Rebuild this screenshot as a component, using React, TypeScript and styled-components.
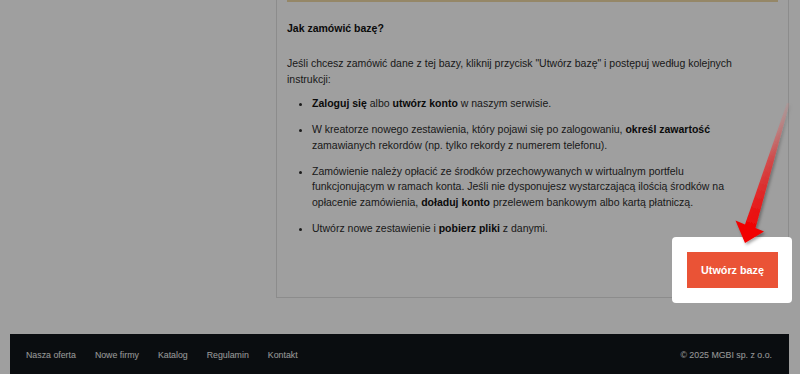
import React from 'react';
import styled, { createGlobalStyle } from 'styled-components';

const GlobalStyle = createGlobalStyle`
  html, body {
    margin: 0;
    padding: 0;
    background: #ffffff;
    overflow: hidden;
  }

  body {
    font-family: "Liberation Sans", Arial, sans-serif;
    color: #333333;
  }
`;

const footerLinks = ['Nasza oferta', 'Nowe firmy', 'Katalog', 'Regulamin', 'Kontakt'];

const App: React.FC = () => {
  return (
    <>
      <GlobalStyle />
      <PageContainer>
        <MainRow>
          <Sidebar />
          <ContentPanel>
            <NoticeBox />
            <SectionTitle>Jak zamówić bazę?</SectionTitle>
            <Paragraph>
              Jeśli chcesz zamówić dane z tej bazy, kliknij przycisk "Utwórz bazę" i postępuj według kolejnych
              <br />
              instrukcji:
            </Paragraph>
            <StepList>
              <li>
                <b>Zaloguj się</b> albo <b>utwórz konto</b> w naszym serwisie.
              </li>
              <li>
                W kreatorze nowego zestawienia, który pojawi się po zalogowaniu, <b>określ zawartość</b>
                <br />
                zamawianych rekordów (np. tylko rekordy z numerem telefonu).
              </li>
              <li>
                Zamówienie należy opłacić ze środków przechowywanych w wirtualnym portfelu
                <br />
                funkcjonującym w ramach konta. Jeśli nie dysponujesz wystarczającą ilością środków na
                <br />
                opłacenie zamówienia, <b>doładuj konto</b> przelewem bankowym albo kartą płatniczą.
              </li>
              <li>
                Utwórz nowe zestawienie i <b>pobierz pliki</b> z danymi.
              </li>
            </StepList>
            <ButtonRow>
              <Spotlight>
                <PointerArrow viewBox="0 0 66 150" width="66" height="150">
                  <defs>
                    <linearGradient
                      id="arrowFade"
                      gradientUnits="userSpaceOnUse"
                      x1="56"
                      y1="7"
                      x2="18"
                      y2="135"
                    >
                      <stop offset="0" stopColor="#e07a7a" stopOpacity="0.15" />
                      <stop offset="0.45" stopColor="#e03a3a" stopOpacity="0.8" />
                      <stop offset="1" stopColor="#f20000" />
                    </linearGradient>
                    <filter id="arrowShadow" x="-30%" y="-10%" width="160%" height="130%">
                      <feDropShadow dx="1.5" dy="2" stdDeviation="1.5" floodColor="#000" floodOpacity="0.35" />
                    </filter>
                  </defs>
                  <path
                    d="M55 6.7 L57.5 7.4 L23.5 132 L32 135.5 L13 147 L3.5 124.5 L13 128.5 Z"
                    fill="url(#arrowFade)"
                    filter="url(#arrowShadow)"
                  />
                </PointerArrow>
                <CreateButton type="button">Utwórz bazę</CreateButton>
              </Spotlight>
            </ButtonRow>
          </ContentPanel>
        </MainRow>
        <Footer>
          <FooterNav>
            {footerLinks.map((link) => (
              <FooterLink key={link}>{link}</FooterLink>
            ))}
          </FooterNav>
          <Copyright>© 2025 MGBI sp. z o.o.</Copyright>
        </Footer>
      </PageContainer>
    </>
  );
};

const PageContainer = styled.div`
  width: 779px;
  margin-left: 10px;
`;

const MainRow = styled.div`
  display: grid;
  grid-template-columns: 266px 513px;
`;

const Sidebar = styled.div``;

const ContentPanel = styled.div`
  border: 1px solid #e0e0e0;
  border-top: none;
  padding: 0 10px 9px 10px;
  font-size: 10.5px;
  line-height: 15.5px;
  color: #2c2c2c;
`;

const NoticeBox = styled.div`
  margin-top: -40px;
  height: 38px;
  background: #fcf8e3;
  border: 2px solid #efd9a6;
`;

const SectionTitle = styled.h3`
  margin: 19px 0 19.5px;
  font-size: 10.5px;
  line-height: 15.5px;
  font-weight: bold;
  color: #111111;
`;

const Paragraph = styled.p`
  margin: 0 0 9px;
`;

const StepList = styled.ul`
  margin: 0;
  padding-left: 25px;

  li {
    margin-bottom: 10.5px;
  }

  b {
    color: #111111;
  }
`;

const ButtonRow = styled.div`
  display: flex;
  justify-content: flex-end;
  padding-top: 5px;
`;

const Spotlight = styled.div`
  position: relative;
  z-index: 10;
  display: flex;
  padding: 15px 14px 15px 15px;
  margin: -15px -14px -15px -15px;
  background: #ffffff;
  border-radius: 4px;
  box-shadow: 0 0 0 3000px rgba(0, 0, 0, 0.375);
`;

const PointerArrow = styled.svg`
  position: absolute;
  left: 60px;
  top: -141px;
  overflow: visible;
`;

const CreateButton = styled.button`
  width: 91px;
  height: 36px;
  border: none;
  background: #ea5336;
  color: #ffffff;
  font-family: "Liberation Sans", Arial, sans-serif;
  font-size: 10.8px;
  font-weight: bold;
  padding: 0;
  cursor: pointer;
`;

const Footer = styled.footer`
  margin-top: 36px;
  height: 50px;
  box-sizing: border-box;
  padding: 16.5px 17px 0 16px;
  background: #10151b;
  display: flex;
  justify-content: space-between;
  align-items: flex-start;
  font-size: 8.8px;
  line-height: 11px;
  color: #f5f5f5;
`;

const FooterNav = styled.nav`
  display: flex;
  gap: 19px;
`;

const FooterLink = styled.a`
  color: #f5f5f5;
  text-decoration: none;
`;

const Copyright = styled.span`
  color: #f5f5f5;
`;

export default App;
